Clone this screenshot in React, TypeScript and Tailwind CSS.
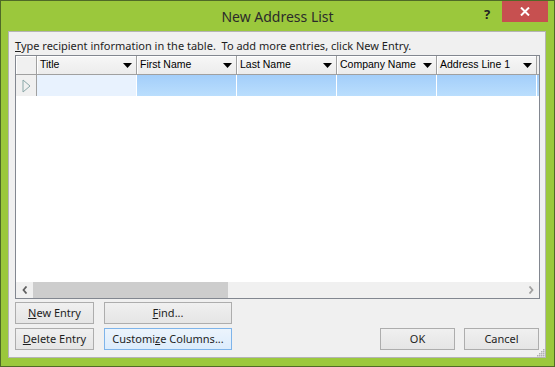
import React from 'react'

const columns = ['Title', 'First Name', 'Last Name', 'Company Name', 'Address Line 1']

function DropArrow() {
  return (
    <svg width="9" height="5" viewBox="0 0 9 5" className="ml-auto mr-[4px] shrink-0">
      <path d="M0 0 H9 L4.5 5 Z" fill="#000" />
    </svg>
  )
}

function Btn({
  children,
  w,
  focused = false,
}: {
  children: React.ReactNode
  w: string
  focused?: boolean
}) {
  return (
    <button
      className={
        'h-[22px] flex items-center justify-center text-[11px] text-[#1e1e1e] border ' +
        w +
        (focused
          ? ' border-[#7eb4ea] bg-gradient-to-b from-[#ecf4fc] to-[#dcecfc]'
          : ' border-[#adadad] bg-gradient-to-b from-[#f0f0f0] to-[#e5e5e5]')
      }
    >
      {children}
    </button>
  )
}

function Grid() {
  return (
    <div className="h-[244px] w-[525px] border border-[#828790] bg-white flex flex-col font-['Liberation_Sans',Arial,sans-serif]">
      {/* header */}
      <div className="flex h-[19px] shrink-0">
        <div className="w-[21px] border-r border-b border-[#a0a0a0] bg-[#f0f0f0] shadow-[inset_1px_1px_0_#fff]" />
        {columns.map((c) => (
          <div
            key={c}
            className="w-[100px] flex items-center pl-[3px] border-r border-b border-[#a0a0a0] bg-gradient-to-b from-[#f7f7f7] to-[#ececec] shadow-[inset_1px_1px_0_#fff] text-[10.5px] text-black"
          >
            <span>{c}</span>
            <DropArrow />
          </div>
        ))}
        <div className="flex-1 border-b border-[#a0a0a0] bg-[#f0f0f0]" />
      </div>
      {/* new entry row */}
      <div className="flex h-[21px] shrink-0">
        <div className="w-[21px] flex items-center justify-center border-r border-[#a0a0a0] bg-[#f0f0f0]">
          <svg width="9" height="14" viewBox="0 0 9 14">
            <path d="M1 1 L8 7 L1 13 Z" fill="none" stroke="#8aa7a8" strokeWidth="1" />
          </svg>
        </div>
        <div className="w-[100px] bg-[#e8f2fe] border-r border-white" />
        <div className="w-[100px] bg-gradient-to-b from-[#a3cefa] to-[#badefd] border-r border-white" />
        <div className="w-[100px] bg-gradient-to-b from-[#a3cefa] to-[#badefd] border-r border-white" />
        <div className="w-[100px] bg-gradient-to-b from-[#a3cefa] to-[#badefd] border-r border-white" />
        <div className="w-[100px] bg-gradient-to-b from-[#a3cefa] to-[#badefd] border-r border-white" />
        <div className="flex-1 bg-gradient-to-b from-[#a3cefa] to-[#badefd]" />
      </div>
      {/* horizontal scrollbar */}
      <div className="mt-auto h-[16px] flex bg-[#f0f0f0]">
        <div className="w-[17px] flex items-center justify-center">
          <svg width="6" height="8" viewBox="0 0 6 8">
            <path d="M4.5 0.5 L1.5 4 L4.5 7.5" fill="none" stroke="#606060" strokeWidth="1.8" />
          </svg>
        </div>
        <div className="w-[195px] bg-[#cdcdcd]" />
        <div className="flex-1" />
        <div className="w-[17px] flex items-center justify-center">
          <svg width="6" height="8" viewBox="0 0 6 8">
            <path d="M1.5 0.5 L4.5 4 L1.5 7.5" fill="none" stroke="#a0a0a0" strokeWidth="1.8" />
          </svg>
        </div>
      </div>
    </div>
  )
}

export default function App() {
  return (
    <div className="w-[555px] h-[367px] border border-[#4f6a27] bg-[#9bc83c] flex flex-col font-['Noto_Sans',sans-serif]">
      {/* title bar */}
      <div className="relative h-[30px] shrink-0 flex items-center justify-center">
        <span className="text-[14px] text-[#2b2b2b] mt-[1px]">New Address List</span>
        <span className="absolute left-[483px] top-[4px] text-[13px] font-bold text-[#222]">?</span>
        <div className="absolute left-[501px] top-0 w-[46px] h-[21px] bg-[#c75050] flex items-center justify-center">
          <svg width="10" height="9" viewBox="0 0 10 9">
            <path d="M1 0.5 L9 8.5 M9 0.5 L1 8.5" stroke="#fff" strokeWidth="2" />
          </svg>
        </div>
      </div>

      {/* client area */}
      <div className="ml-[7px] w-[538px] h-[327px] border border-[#b4b4b4] bg-[#f0f0f0] flex flex-col pl-[6px] pt-[5px] relative">
        <div className="h-[18px] leading-[18px] text-[11px] text-[#1e1e1e]">
          <span className="underline">T</span>ype recipient information in the table.&nbsp; To add more entries, click New Entry.
        </div>
        <Grid />
        <div className="mt-[3px] flex flex-col gap-[4px] w-[524px]">
          <div className="flex gap-[10px]">
            <Btn w="w-[79px]">
              <span className="underline">N</span>ew Entry
            </Btn>
            <Btn w="w-[128px]">
              <span className="underline">F</span>ind...
            </Btn>
          </div>
          <div className="flex gap-[10px]">
            <Btn w="w-[79px]">
              <span className="underline">D</span>elete Entry
            </Btn>
            <Btn w="w-[128px]" focused>
              Customi<span className="underline">z</span>e Columns...
            </Btn>
            <div className="ml-auto flex gap-[9px]">
              <Btn w="w-[75px]">OK</Btn>
              <Btn w="w-[75px]">Cancel</Btn>
            </div>
          </div>
        </div>
        {/* resize grip */}
        <svg width="8" height="8" viewBox="0 0 8 8" className="absolute right-0 bottom-0">
          <rect x="6" y="0" width="1.5" height="1.5" fill="#b0b0b0" />
          <rect x="4" y="2" width="1.5" height="1.5" fill="#b0b0b0" />
          <rect x="6" y="2" width="1.5" height="1.5" fill="#b0b0b0" />
          <rect x="2" y="4" width="1.5" height="1.5" fill="#b0b0b0" />
          <rect x="4" y="4" width="1.5" height="1.5" fill="#b0b0b0" />
          <rect x="6" y="4" width="1.5" height="1.5" fill="#b0b0b0" />
          <rect x="0" y="6" width="1.5" height="1.5" fill="#b0b0b0" />
          <rect x="2" y="6" width="1.5" height="1.5" fill="#b0b0b0" />
          <rect x="4" y="6" width="1.5" height="1.5" fill="#b0b0b0" />
          <rect x="6" y="6" width="1.5" height="1.5" fill="#b0b0b0" />
        </svg>
      </div>
    </div>
  )
}
